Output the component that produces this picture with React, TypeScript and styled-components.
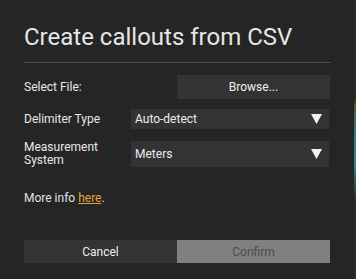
import React from "react";
import styled, { createGlobalStyle } from "styled-components";

const Global = createGlobalStyle`
  html, body { margin: 0; padding: 0; }
  body {
    width: 356px;
    height: 279px;
    overflow: hidden;
    background: linear-gradient(180deg, #2b2b2b 0px, #2b2b2b 100px, #6a4a20 105px, #3f6f70 120px, #2f8a8c 165px, #2a2a2a 200px, #2a2a2a 279px);
    font-family: Roboto, "Liberation Sans", sans-serif;
  }
`;

const Dialog = styled.div`
  width: 354px;
  height: 279px;
  box-sizing: border-box;
  background: #252525;
  padding: 23px 23px 0 24px;
  display: flex;
  flex-direction: column;
`;

const Title = styled.h1`
  margin: 0;
  font-size: 24px;
  font-weight: 400;
  line-height: 28px;
  color: #e6e6e6;
  padding-bottom: 11px;
  border-bottom: 1px solid #4a4a4a;
`;

const HalfRow = styled.div<{ $mt: number }>`
  display: grid;
  grid-template-columns: 153px 153px;
  margin-top: ${(p) => p.$mt}px;
  align-items: center;
`;

const FieldRow = styled.div<{ $mt: number; $h: number }>`
  display: grid;
  grid-template-columns: 107px 198px;
  margin-top: ${(p) => p.$mt}px;
  height: ${(p) => p.$h}px;
  align-items: center;
`;

const Label = styled.div`
  font-size: 12px;
  line-height: 13px;
  color: #e8e8e8;
`;

const Button = styled.button<{ $variant?: "default" | "disabled" }>`
  height: ${(p) => (p.$variant ? 23 : 24)}px;
  border: none;
  margin: 0;
  padding: 0;
  font-family: Roboto, "Liberation Sans", sans-serif;
  font-size: 12px;
  background: ${(p) => (p.$variant === "disabled" ? "#808080" : "#333333")};
  color: ${(p) => (p.$variant === "disabled" ? "#4c4c4c" : "#f0f0f0")};
  cursor: default;
`;

const Select = styled.div`
  height: 100%;
  background: #333333;
  display: flex;
  align-items: center;
  justify-content: space-between;
  padding: 0 7px 0 4px;
  font-size: 12px;
  color: #ececec;
`;

const Arrow = styled.svg`
  width: 11px;
  height: 10px;
  display: block;
`;

const Info = styled.div`
  margin-top: 26px;
  font-size: 12px;
  line-height: 14px;
  color: #e0e0e0;
`;

const Link = styled.a`
  color: #e3a43a;
  text-decoration: underline;
`;

const Footer = styled(HalfRow)``;

const Caret = () => (
  <Arrow viewBox="0 0 11 10">
    <polygon points="0,0 11,0 5.5,10" fill="#f2f2f2" />
  </Arrow>
);

export default function App() {
  return (
    <>
      <Global />
      <Dialog>
        <Title>Create callouts from CSV</Title>
        <HalfRow $mt={12}>
          <Label>Select File:</Label>
          <Button>Browse...</Button>
        </HalfRow>
        <FieldRow $mt={10} $h={20}>
          <Label>Delimiter Type</Label>
          <Select>
            <span>Auto-detect</span>
            <Caret />
          </Select>
        </FieldRow>
        <FieldRow $mt={12} $h={24}>
          <Label>Measurement System</Label>
          <Select>
            <span>Meters</span>
            <Caret />
          </Select>
        </FieldRow>
        <Info>
          More info <Link>here</Link>.
        </Info>
        <Footer $mt={35}>
          <Button $variant="default">Cancel</Button>
          <Button $variant="disabled">Confirm</Button>
        </Footer>
      </Dialog>
    </>
  );
}
